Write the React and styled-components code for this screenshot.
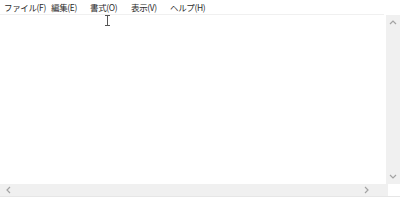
import React from "react";
import styled, { createGlobalStyle } from "styled-components";

const Global = createGlobalStyle`
  html, body { margin: 0; padding: 0; background: #fff; }
  body { width: 400px; height: 200px; overflow: hidden; }
`;

const Window = styled.div`
  width: 400px;
  height: 200px;
  display: flex;
  flex-direction: column;
  background: #fff;
  position: relative;
  font-family: "Noto Sans CJK JP", "Noto Sans", sans-serif;
`;

const MenuBar = styled.div`
  height: 14px;
  display: flex;
  align-items: center;
  padding-left: 4px;
  border-bottom: 1px solid #f0f0f0;
  margin-right: 16px;
`;

const MenuItem = styled.span`
  box-sizing: border-box;
  font-size: 8.5px;
  line-height: 14px;
  color: #2b2b2b;
  width: ${(p) => p.$w}px;
  white-space: nowrap;
  letter-spacing: -0.35px;
`;

const Body = styled.div`
  flex: 1;
  display: flex;
  min-height: 0;
`;

const Editor = styled.div`
  flex: 1;
  background: #fff;
`;

const VScroll = styled.div`
  width: 14px;
  background: #f0f0f0;
  display: flex;
  flex-direction: column;
  justify-content: space-between;
  align-items: center;
  padding: 4px 0 3px;
`;

const HScroll = styled.div`
  height: 12px;
  background: #f0f0f0;
  display: flex;
  align-items: center;
  justify-content: space-between;
  padding: 0 17px 0 5px;
  margin-right: 12px;
`;

const BottomLine = styled.div`
  height: 3px;
  border-top: 1px solid #e6e6e6;
  background: #fff;
`;

const Cursor = styled.svg`
  position: absolute;
  left: 104px;
  top: 15px;
`;

const Arrow = ({ dir }) => {
  const paths = {
    up: "M1 5 L4 2 L7 5",
    down: "M1 2 L4 5 L7 2",
    left: "M5 1 L2 4 L5 7",
    right: "M2 1 L5 4 L2 7",
  };
  return (
    <svg width="8" height="8" viewBox="0 0 8 8">
      <path d={paths[dir]} fill="none" stroke="#a3a3a3" strokeWidth="1.2" />
    </svg>
  );
};

const menus = [
  ["ファイル(F)", 47],
  ["編集(E)", 39],
  ["書式(O)", 41],
  ["表示(V)", 39],
  ["ヘルプ(H)", 45],
];

export default function App() {
  return (
    <>
      <Global />
      <Window>
        <MenuBar>
          {menus.map(([t, w]) => (
            <MenuItem key={t} $w={w}>
              {t}
            </MenuItem>
          ))}
        </MenuBar>
        <Body>
          <Editor />
          <VScroll>
            <Arrow dir="up" />
            <Arrow dir="down" />
          </VScroll>
        </Body>
        <HScroll>
          <Arrow dir="left" />
          <Arrow dir="right" />
        </HScroll>
        <BottomLine />
        <Cursor width="7" height="11" viewBox="0 0 7 11">
          <path d="M1 0.5 H6 M3.5 0.5 V10.5 M1 10.5 H6" stroke="#555" strokeWidth="1" fill="none" />
        </Cursor>
      </Window>
    </>
  );
}
